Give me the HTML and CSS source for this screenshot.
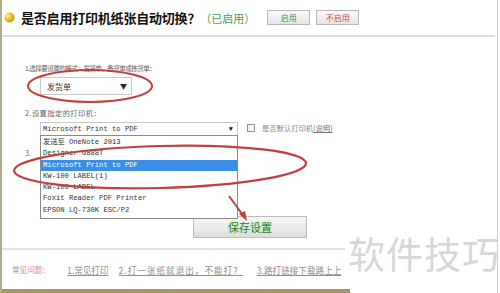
FILE: index.html
```html
<!DOCTYPE html>
<html lang="zh">
<head>
<meta charset="utf-8">
<link rel="stylesheet" href="styles.css">
</head>
<body>
<div class="page">
  <header class="head">
    <svg class="ball" width="11" height="11" viewBox="0 0 11 11">
      <defs>
        <radialGradient id="g" cx="0.35" cy="0.35" r="0.7">
          <stop offset="0" stop-color="#fff3a0"/>
          <stop offset="0.5" stop-color="#f2c21a"/>
          <stop offset="1" stop-color="#c98a10"/>
        </radialGradient>
      </defs>
      <circle cx="5.5" cy="5.5" r="5" fill="url(#g)"/>
    </svg>
    <h1 class="title">是否启用打印机纸张自动切换？<span class="state">（已启用）</span></h1>
    <div class="btns">
      <button class="btn on">启用</button>
      <button class="btn off">不启用</button>
    </div>
  </header>

  <main class="content">
    <p class="label l1">1.选择要设置的格式：发货单、备货单或拣货单：</p>
    <div class="select s1"><span>发货单</span><span class="arrow">▼</span></div>

    <p class="label l2">2.设置指定的打印机：</p>
    <div class="row">
      <div class="combo">
        <div class="select s2"><span>Microsoft Print to PDF</span><span class="arrow">▼</span></div>
        <ul class="list">
          <li>发送至 OneNote 2013</li>
          <li>Designer G888T</li>
          <li class="sel">Microsoft Print to PDF</li>
          <li>KW-100 LABEL(1)</li>
          <li>KW-100 LABEL</li>
          <li>Foxit Reader PDF Printer</li>
          <li>EPSON LQ-730K ESC/P2</li>
        </ul>
      </div>
      <label class="chk"><span class="box"></span>是否默认打印机<u>(说明)</u></label>
    </div>

    <p class="label l3">3.</p>

    <div class="save-row"><button class="save">保存设置</button></div>
  </main>

  <div class="rule"></div>

  <footer class="foot">
    <span class="faq">常见<em>问题：</em></span>
    <a>1.常见打印</a>
    <a class="wide">2.打一张纸就退出，不能打？</a>
    <a>3.路打链接下载路上上</a>
  </footer>

  <div class="bottom-bar"></div>

  <div class="watermark">软件技巧</div>

  <svg class="marks" width="500" height="293" viewBox="0 0 500 293">
    <ellipse cx="90" cy="86" rx="62" ry="16" fill="none" stroke="#c0403c" stroke-width="2"/>
    <ellipse cx="160" cy="167" rx="146" ry="21" fill="none" stroke="#c0403c" stroke-width="2.2" transform="rotate(-1.5 160 167)"/>
    <line x1="229" y1="196" x2="245" y2="218" stroke="#c0403c" stroke-width="2"/>
    <polygon points="247,221 239,214 245,211" fill="#c0403c"/>
  </svg>
</div>
</body>
</html>
```

FILE: styles.css
```css
* { box-sizing: border-box; }
html, body { margin: 0; padding: 0; }
body {
  width: 500px;
  height: 293px;
  overflow: hidden;
  background: #fff;
  font-family: "Noto Sans CJK SC", "Liberation Sans", sans-serif;
  color: #555;
}
.page {
  position: relative;
  width: 500px;
  height: 293px;
  border-left: 2px solid #b3aa86;
}
.page::after {
  content: "";
  position: absolute;
  right: 2px;
  top: 0;
  bottom: 0;
  width: 1px;
  background: #cfcfcf;
}
.head {
  height: 37px;
  display: flex;
  align-items: center;
  padding-left: 2px;
  border-bottom: 2px solid #dcdcdc;
  margin-right: 5px;
}
.ball { flex: none; margin-right: 6px; }
.title {
  margin: 0;
  font-size: 13px;
  font-weight: bold;
  color: #111;
  letter-spacing: -0.2px;
  white-space: nowrap;
}
.state { font-weight: normal; font-size: 11px; color: #4f9a55; letter-spacing: 0; }
.btns { display: flex; gap: 6px; margin-left: 12px; }
.btn {
  width: 43px;
  height: 15px;
  padding: 0;
  font: 8px "Noto Sans CJK SC", sans-serif;
  border: 1px solid #b8b8b8;
  background: linear-gradient(#fafafa, #e4e4e4);
  line-height: 13px;
}
.btn.on { color: #3a9a3a; }
.btn.off { color: #d04a4a; }

.content { position: relative; padding-left: 23px; height: 211px; }
.label {
  margin: 0;
  font-size: 7.3px;
  line-height: 12px;
  color: #666;
  white-space: nowrap;
}
.l1 { padding-top: 25px; font-size: 6.6px; letter-spacing: -0.6px; }
.select {
  display: flex;
  justify-content: space-between;
  align-items: center;
  border: 1px solid #c8c8c8;
  background: #fff;
  color: #333;
}
.arrow { font-size: 7px; color: #222; }
.s1 {
  margin: 3px 0 0 15px;
  width: 92px;
  height: 18px;
  padding: 0 4px 0 6px;
  font-size: 8px;
}
.l2 { margin-top: 12px; letter-spacing: 0.4px; }
.row { display: flex; align-items: flex-start; margin-top: 3px; margin-left: 15px; }
.combo { position: relative; width: 198px; }
.s2 {
  height: 14px;
  padding: 0 4px 0 2px;
  font-family: "Liberation Mono", monospace;
  font-size: 7.2px;
  color: #333;
}
.list {
  position: absolute;
  left: 0;
  top: 13px;
  width: 198px;
  margin: 0;
  padding: 1px 0 2px;
  list-style: none;
  border: 1px solid #8a8a8a;
  background: #fff;
  z-index: 2;
  font-family: "Liberation Mono", "Noto Sans CJK SC", monospace;
  font-size: 7.2px;
  color: #333;
}
.list li { height: 11.3px; line-height: 11.3px; padding-left: 2px; white-space: nowrap; }
.list li.sel { background: #3a8ee6; color: #fff; }
.chk {
  display: flex;
  align-items: center;
  margin-left: 9px;
  font-size: 7.3px;
  line-height: 12px;
  color: #888;
  white-space: nowrap;
}
.box {
  width: 8px;
  height: 8px;
  border: 1px solid #999;
  background: #f4f4f4;
  margin-right: 7px;
}
.chk u { color: #777; }
.l3 { margin-top: 11px; }
.save-row { margin-top: 54px; padding-left: 168px; }
.save {
  width: 114px;
  height: 22px;
  padding: 0;
  border: 1px solid #bdbdbd;
  background: linear-gradient(#f7f7f7, #dedede);
  color: #2f7d2f;
  font: 11px "Noto Sans CJK SC", sans-serif;
  text-shadow: 0 0 3px #a8f0a8;
}
.rule {
  width: 343px;
  height: 2px;
  background: #e2e2e2;
}
.foot {
  display: flex;
  align-items: center;
  height: 39px;
  padding-left: 10px;
  font-size: 7.6px;
  color: #888;
  white-space: nowrap;
}
.faq { margin-right: 17px; color: #999; }
.faq em { font-style: normal; color: #e48a9a; }
.foot a { color: #8f8f8f; text-decoration: underline; font-size: 8.6px; margin-right: 10px; }
.foot a.wide { letter-spacing: 1px; margin-right: 14px; }
.bottom-bar {
  width: 348px;
  height: 4px;
  background: #a8956a;
}
.watermark {
  position: absolute;
  left: 343px;
  top: 231px;
  font-size: 37px;
  line-height: 44px;
  color: #d6d6d6;
  letter-spacing: 1px;
  background: #fff;
  padding-left: 3px;
}
.marks { position: absolute; left: -2px; top: 0; z-index: 5; pointer-events: none; }
```
